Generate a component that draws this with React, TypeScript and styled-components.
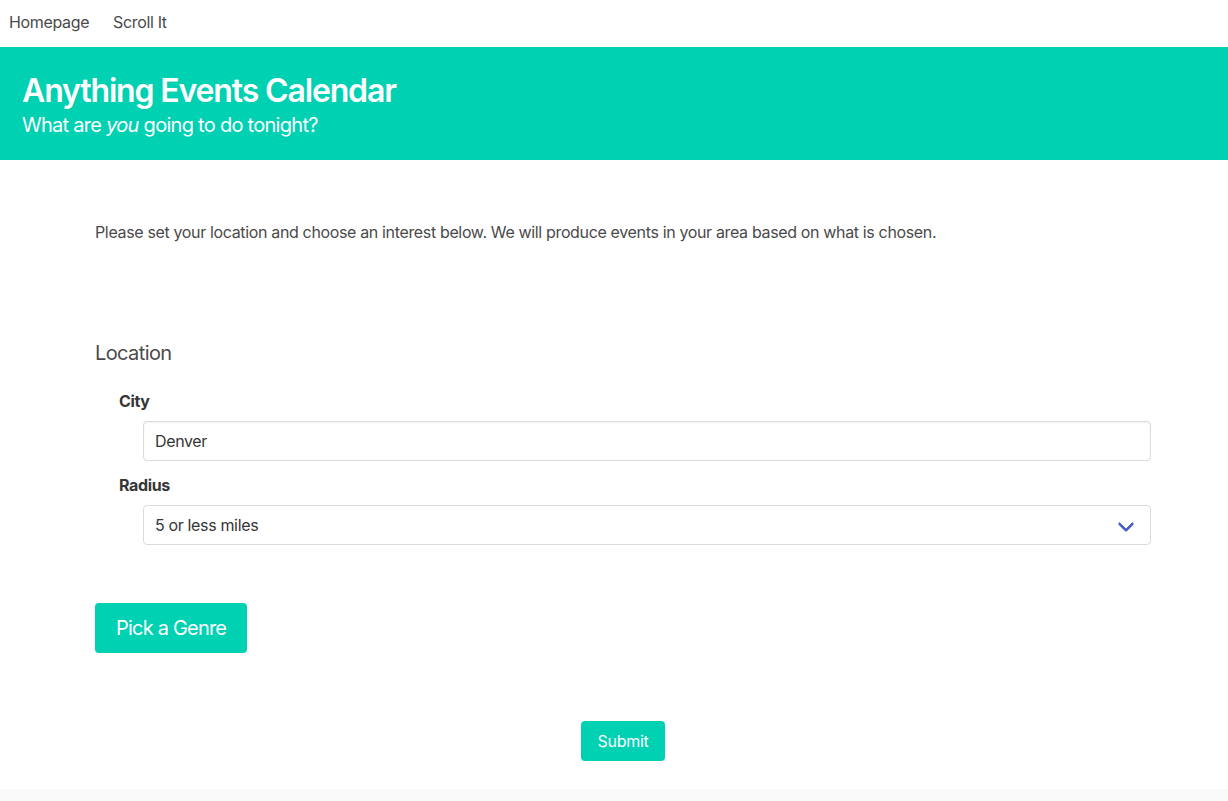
import React from "react";
import styled, { createGlobalStyle } from "styled-components";

const Global = createGlobalStyle`
  html, body { margin: 0; padding: 0; background: #fff; }
  body {
    font-family: Inter, "Noto Sans", "Liberation Sans", sans-serif;
    font-size: 16px;
    line-height: 1.5;
    color: #4a4a4a;
    letter-spacing: -0.35px;
  }
  * { box-sizing: border-box; }
`;

const Navbar = styled.nav`
  height: 47px;
  display: flex;
  align-items: flex-start;
  padding: 10px 9px 0;
  gap: 24px;
  background: #fff;
`;

const NavItem = styled.a`
  color: #4a4a4a;
  text-decoration: none;
  font-size: 16px;
  line-height: 24px;
  cursor: pointer;
`;

const Hero = styled.header`
  background: #00d1b2;
  padding: 26px 22px 22px;
  height: 113px;
`;

const Title = styled.h1`
  margin: 0;
  color: #fff;
  font-size: 32px;
  font-weight: 600;
  line-height: 36px;
  letter-spacing: -1.15px;
`;

const Subtitle = styled.h2`
  margin: 4px 0 0;
  color: #fff;
  font-size: 20px;
  font-weight: 400;
  line-height: 25px;
  letter-spacing: -0.72px;
`;

const Main = styled.main`
  padding: 60px 77px 28px 95px;
`;

const Intro = styled.p`
  margin: 0;
  font-size: 16px;
  line-height: 24px;
  color: #4a4a4a;
`;

const SectionHeading = styled.h3`
  margin: 97px 0 0;
  font-size: 20px;
  font-weight: 400;
  line-height: 25px;
  color: #4a4a4a;
  letter-spacing: -0.6px;
`;

const Field = styled.div<{ $first?: boolean }>`
  margin-top: ${(p) => (p.$first ? "23px" : "12px")};
  padding-left: 24px;
`;

const Label = styled.label`
  display: block;
  font-weight: 700;
  font-size: 16px;
  line-height: 24px;
  color: #363636;
  margin-bottom: 8px;
`;

const Control = styled.div`
  padding-left: 24px;
  position: relative;
`;

const Input = styled.input`
  display: block;
  width: 100%;
  height: 40px;
  border: 1px solid #dbdbdb;
  border-radius: 4px;
  padding: 0 11px;
  font-family: inherit;
  font-size: 16px;
  letter-spacing: -0.35px;
  color: #363636;
  background: #fff;
  box-shadow: inset 0 0.0625em 0.125em rgba(10, 10, 10, 0.05);
  outline: none;
`;

const SelectWrap = styled.div`
  position: relative;
  &::after {
    content: "";
    position: absolute;
    right: 19px;
    top: 50%;
    margin-top: -7px;
    width: 9px;
    height: 9px;
    border: 3px solid #485fc7;
    border-right: 0;
    border-top: 0;
    border-radius: 2px;
    transform: rotate(-45deg);
    pointer-events: none;
  }
`;

const Select = styled.select`
  display: block;
  width: 100%;
  height: 40px;
  border: 1px solid #dbdbdb;
  border-radius: 4px;
  padding: 0 40px 0 11px;
  font-family: inherit;
  font-size: 16px;
  letter-spacing: -0.35px;
  color: #363636;
  background: #fff;
  appearance: none;
  -webkit-appearance: none;
  outline: none;
`;

const Button = styled.button<{ $size?: "medium" | "normal" }>`
  display: inline-flex;
  align-items: center;
  justify-content: center;
  background: #00d1b2;
  color: #fff;
  border: 1px solid transparent;
  border-radius: 4px;
  font-family: inherit;
  cursor: pointer;
  font-size: ${(p) => (p.$size === "medium" ? "20px" : "16px")};
  letter-spacing: ${(p) => (p.$size === "medium" ? "-0.8px" : "-0.3px")};
  height: ${(p) => (p.$size === "medium" ? "50px" : "40px")};
  padding: 0 ${(p) => (p.$size === "medium" ? "20px" : "16px")};
`;

const GenreRow = styled.div`
  margin-top: 58px;
  display: flex;
`;

const SubmitRow = styled.div`
  margin-top: 68px;
  display: flex;
  justify-content: center;
`;

const Footer = styled.footer`
  background: #fafafa;
  height: 96px;
`;

export default function App() {
  return (
    <>
      <Global />
      <Navbar>
        <NavItem>Homepage</NavItem>
        <NavItem>Scroll It</NavItem>
      </Navbar>
      <Hero>
        <Title>Anything Events Calendar</Title>
        <Subtitle>
          What are <em>you</em> going to do tonight?
        </Subtitle>
      </Hero>
      <Main>
        <Intro>
          Please set your location and choose an interest below. We will produce
          events in your area based on what is chosen.
        </Intro>
        <SectionHeading>Location</SectionHeading>
        <Field $first>
          <Label>City</Label>
          <Control>
            <Input defaultValue="Denver" />
          </Control>
        </Field>
        <Field>
          <Label>Radius</Label>
          <Control>
            <SelectWrap>
              <Select defaultValue="5">
                <option value="5">5 or less miles</option>
                <option value="10">10 or less miles</option>
                <option value="25">25 or less miles</option>
              </Select>
            </SelectWrap>
          </Control>
        </Field>
        <GenreRow>
          <Button $size="medium">Pick a Genre</Button>
        </GenreRow>
        <SubmitRow>
          <Button>Submit</Button>
        </SubmitRow>
      </Main>
      <Footer />
    </>
  );
}
